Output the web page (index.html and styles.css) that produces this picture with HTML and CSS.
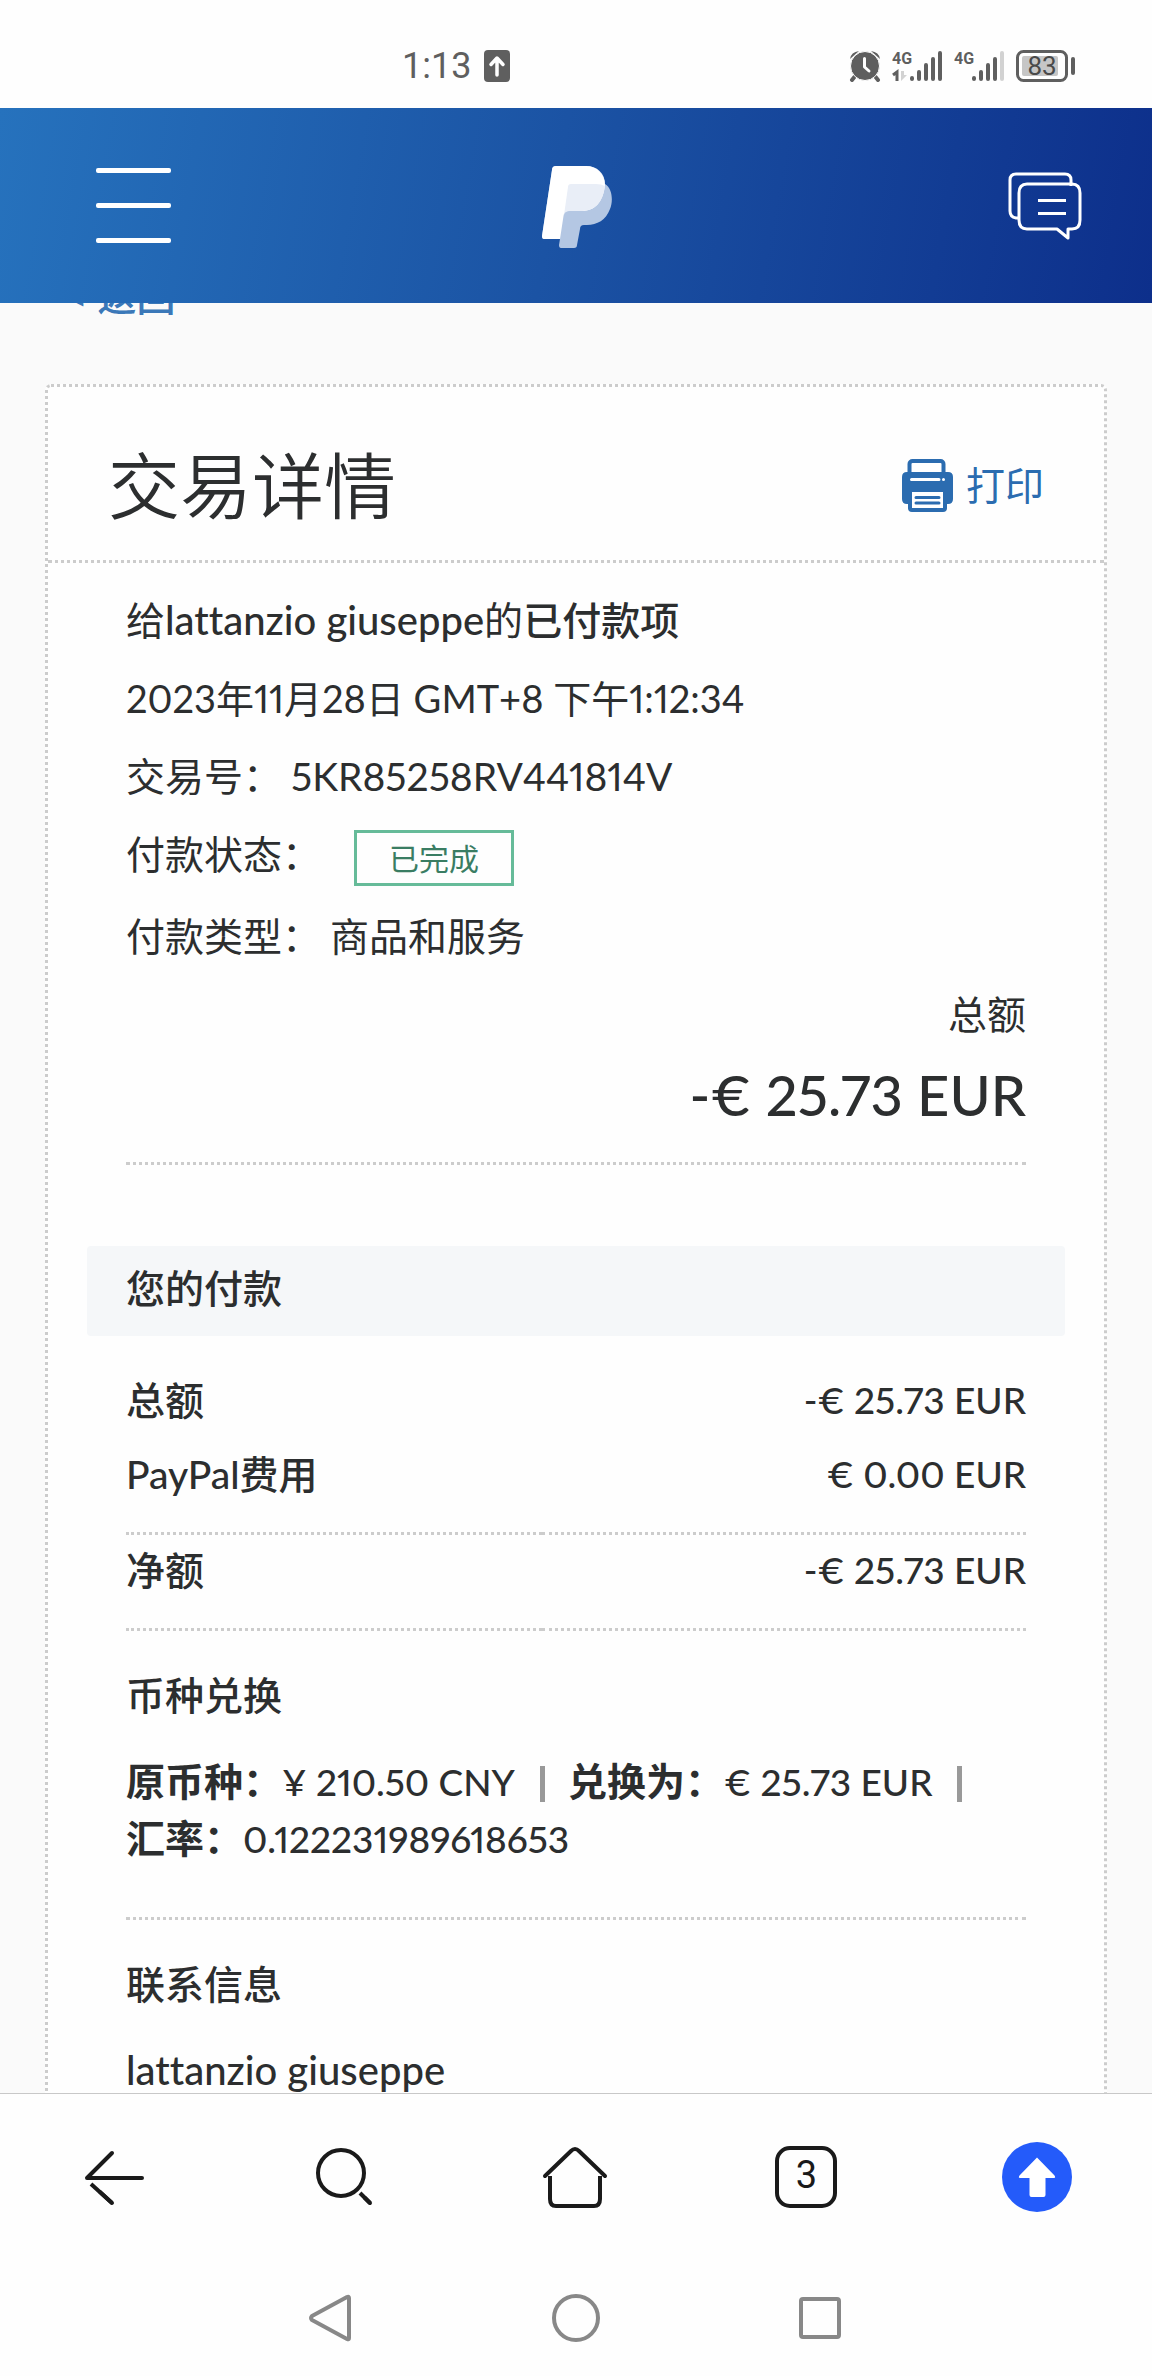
FILE: index.html
```html
<!DOCTYPE html>
<html lang="zh-CN">
<head>
<meta charset="utf-8">
<meta name="viewport" content="width=device-width, initial-scale=1">
<title>交易详情</title>
<link rel="stylesheet" href="styles.css">
</head>
<body>
<div class="status-bar">
  <div class="status-left">
    <span class="clock">1:13</span>
    <svg class="icon" width="26" height="32" viewBox="0 0 26 32" aria-hidden="true"><rect width="26" height="32" rx="4" fill="#5f5f5f"/><path d="M13 25V9M7 14.500l6-6.500 6 6.500" fill="none" stroke="#fff" stroke-width="3.500" stroke-linecap="round" stroke-linejoin="round"/></svg>
  </div>
  <div class="status-right">
    <svg class="icon" width="32" height="32" viewBox="0 0 32 32" aria-hidden="true"><path d="M7 25l-4 5M25 25l4 5" stroke="#5f5f5f" stroke-width="4" stroke-linecap="round" fill="none"/><path d="M1 9Q2 2 10 1ZM31 9Q30 2 22 1Z" fill="#5f5f5f"/><circle cx="16" cy="16" r="14.500" fill="#5f5f5f" stroke="#fefefe" stroke-width="1"/><path d="M15.500 8.500v8.500l4.500 4" fill="none" stroke="#fff" stroke-width="3" stroke-linecap="round" stroke-linejoin="round"/></svg>
    <svg class="icon signal" width="51" height="32" viewBox="0 0 51 32" aria-hidden="true"><text class="net" x="0" y="14">4G</text><path d="M1 25l4-3v9" fill="none" stroke="#5f5f5f" stroke-width="3"/><path d="M9 21h3v4h3l-6 6z" fill="#d2d2d2"/><g stroke="#5f5f5f" stroke-width="4" stroke-linecap="round"><path d="M20 28v1M27 22v7M34 15v14M41 9v20M48 3v26"/></g></svg>
    <svg class="icon signal" width="51" height="32" viewBox="0 0 51 32" aria-hidden="true"><text class="net" x="0" y="14">4G</text><g stroke="#5f5f5f" stroke-width="4" stroke-linecap="round"><path d="M20 28v1M27 22v7M34 15v14M41 9v20"/><path d="M48 3v26" stroke="#d2d2d2"/></g></svg>
    <svg class="icon" width="60" height="32" viewBox="0 0 60 32" aria-hidden="true"><rect x="1.500" y="1.500" width="49" height="29" rx="6" fill="#fff" stroke="#5f5f5f" stroke-width="3"/><rect x="6" y="6" width="36" height="20" rx="2" fill="#c6c6c6"/><rect x="55" y="7" width="4" height="18" rx="2" fill="#5f5f5f"/><text class="charge" x="26" y="25" text-anchor="middle">83</text></svg>
  </div>
</div>

<header class="site-header">
  <button class="icon-button menu" aria-label="菜单">
    <svg width="75" height="75" viewBox="0 0 75 75"><g fill="#fff"><rect width="75" height="5" rx="2"/><rect y="35" width="75" height="5" rx="2"/><rect y="70" width="75" height="5" rx="2"/></g></svg>
  </button>
  <a class="logo" href="#" aria-label="PayPal">
    <svg width="70" height="82" viewBox="0 0 70 82"><path d="M14 0H44C55 0 63 7 63 18C71 23 71 36 68 43C64 54 55 59 45 59H42Q38 59 38 63L35 79Q35 82 32 82H19Q17 82 17 79L18 73H2Q0 73 0 70L10 4Q10 0 14 0Z" fill="#b4c7e3"/><path d="M14 0H44C55 0 63 8 63 19C61 36 53 45 40 45H27Q22 45 21.500 50L18 73H2Q0 73 0 70L10 4Q10 0 14 0Z" fill="#fff"/><path d="M29 18H54Q59 18 63 20C61 36 53 45 40 45H27Q23 45 22 49L26 21Q26 18 29 18Z" fill="#e9eef7"/></svg>
  </a>
  <button class="icon-button chat" aria-label="消息">
    <svg width="74" height="68" viewBox="0 0 74 68" fill="none" stroke="#fff" stroke-width="3" stroke-linejoin="round"><path d="M11 46H8Q2 45 2 39V8Q2 2 8 2H57Q63 2 63 8V14"/><path d="M19 12H64Q72 12 72 21V48Q72 57 64 57H60V66L49 57H19Q11 57 11 48V21Q11 12 19 12Z"/><path d="M30 28.500H58M30 41.500H58"/></svg>
  </button>
</header>

<main class="page">
  <a class="back" href="#">&lt; 返回</a>
  <article class="card">
    <header class="card-header">
      <h1>交易详情</h1>
      <button class="print">
        <svg width="51" height="53" viewBox="0 0 51 53" aria-hidden="true"><rect x="7.500" y="2" width="34" height="24" rx="3" fill="#fff" stroke="#2b6cb0" stroke-width="4"/><path d="M5 13H46Q51 13 51 18V40Q51 45 46 45H45V49Q45 53 41 53H10Q6 53 6 49V45H5Q0 45 0 40V18Q0 13 5 13Z" fill="#2b6cb0"/><path d="M9.500 20.500H37M41.500 20.500h0" stroke="#fff" stroke-width="3" stroke-linecap="round"/><rect x="10" y="33" width="31" height="16" fill="#fff"/><path d="M14 38.500H37M14 44H37" stroke="#2b6cb0" stroke-width="3" stroke-linecap="round"/></svg>
        <span>打印</span>
      </button>
    </header>
    <div class="card-body">
      <section class="summary">
        <p>给<span class="name">lattanzio giuseppe</span>的<b class="medium">已付款项</b></p>
        <p class="date">2023年11月28日 GMT+8 下午1:12:34</p>
        <p>交易号：<span class="value">5KR85258RV441814V</span></p>
        <p class="state">付款状态：<span class="badge">已完成</span></p>
        <p>付款类型：<span class="value">商品和服务</span></p>
        <div class="total">
          <p>总额</p>
          <p class="amount">-€ 25.73 EUR</p>
        </div>
      </section>

      <h2 class="band">您的付款</h2>
      <table class="payment">
        <tbody>
          <tr><th scope="row">总额</th><td>-€ 25.73 EUR</td></tr>
          <tr class="ruled"><th scope="row">PayPal费用</th><td>€ 0.00 EUR</td></tr>
          <tr class="ruled net-row"><th scope="row">净额</th><td>-€ 25.73 EUR</td></tr>
        </tbody>
      </table>

      <section class="block">
        <h2>币种兑换</h2>
        <p><span class="rate"><b>原币种：</b><span class="figure">¥ 210.50 CNY</span><i class="bar"></i></span><span class="rate"><b>兑换为：</b><span class="figure">€ 25.73 EUR</span><i class="bar"></i></span><span class="rate"><b>汇率：</b><span class="figure">0.122231989618653</span></span></p>
      </section>
      <section class="block">
        <h2>联系信息</h2>
        <p class="name">lattanzio giuseppe</p>
      </section>
    </div>
  </article>
</main>

<nav class="toolbar" aria-label="浏览器">
  <button class="icon-button" aria-label="后退"><svg width="70" height="70" viewBox="0 0 70 70" fill="none" stroke="#1a1a1a" stroke-width="4" stroke-linecap="round" stroke-linejoin="round"><path d="M62 36H7L32 11"/><path d="M11 42L32 61" stroke-linecap="butt"/><path d="M20 50L32 61"/></svg></button>
  <button class="icon-button" aria-label="搜索"><svg width="70" height="70" viewBox="0 0 70 70" fill="none" stroke="#1a1a1a" stroke-width="4" stroke-linecap="round"><circle cx="30" cy="31" r="23"/><path d="M49 51L59 61" stroke-linecap="butt"/><path d="M54 56L59 61"/></svg></button>
  <button class="icon-button" aria-label="主页"><svg width="70" height="70" viewBox="0 0 70 70" fill="none" stroke="#1a1a1a" stroke-width="4" stroke-linecap="round" stroke-linejoin="round"><path d="M4 34L30 9Q34 5 38 9L64 34"/><path d="M9 34V57Q9 64 15 64H53Q59 64 59 57V34" stroke-linecap="butt"/></svg></button>
  <button class="icon-button" aria-label="标签页"><span class="tabs">3</span></button>
  <button class="icon-button" aria-label="回到顶部"><svg width="70" height="70" viewBox="0 0 70 70"><circle cx="35" cy="35" r="35" fill="#245bfa"/><path d="M35 15.500L52.500 33.500Q54 36 52 36H43.500V53Q43.500 55 41.500 55H29.500Q27.500 55 27.500 53V36H18Q16 36 17.500 33.500Z" fill="#fff"/></svg></button>
</nav>
<nav class="system-nav" aria-label="系统导航">
  <button class="icon-button" aria-label="返回"><svg width="50" height="50" viewBox="0 0 50 50" fill="none" stroke="#888" stroke-width="4" stroke-linejoin="round"><path d="M40 4Q42 3 42 5V45Q42 47 40 46L5 27Q3 25 5 23Z"/></svg></button>
  <button class="icon-button" aria-label="主屏幕"><svg width="50" height="50" viewBox="0 0 50 50" fill="none" stroke="#888" stroke-width="4"><circle cx="25" cy="25" r="22"/></svg></button>
  <button class="icon-button" aria-label="最近任务"><svg width="50" height="50" viewBox="0 0 50 50" fill="none" stroke="#888" stroke-width="4"><rect x="6" y="6" width="38" height="38" rx="2"/></svg></button>
</nav>
</body>
</html>
```
FILE: styles.css
```css
* {
  box-sizing: border-box;
}

body {
  display: flex;
  flex-direction: column;
  height: 100vh;
  margin: 0;
  background: #fefefe;
  color: #2c2e2f;
  font: 39px/56px Lato, "Noto Sans CJK SC", sans-serif;
  font-variant-ligatures: none;
  font-variant-numeric: proportional-nums;
}

h1, h2, p {
  margin: 0;
  font-size: inherit;
  font-weight: 400;
}

h2, .medium {
  font-weight: 500;
}

button {
  padding: 0;
  border: 0;
  background: none;
  color: inherit;
  font: inherit;
}

svg {
  display: block;
}

.icon-button {
  display: flex;
  align-items: center;
  justify-content: center;
}

/* Phone status bar */
.status-bar {
  display: flex;
  flex: none;
  align-items: center;
  justify-content: space-between;
  height: 108px;
  padding: 24px 76px 0 402px;
  color: #5f5f5f;
}

.status-left, .status-right {
  display: flex;
  align-items: center;
}

.status-left {
  gap: 13px;
}

.status-right {
  gap: 11px;
}

.clock {
  font: 36px/40px Roboto, sans-serif;
}

.net {
  fill: #5f5f5f;
  font: bold 16px Roboto, sans-serif;
}

.charge {
  fill: #4a4a4a;
  font: 26px Roboto, sans-serif;
}

/* Site header */
.site-header {
  display: grid;
  flex: none;
  grid-template-columns: 1fr auto 1fr;
  align-items: center;
  height: 195px;
  padding: 0 70px 0 96px;
  background: linear-gradient(100deg, #2672bd 0%, #1b53a4 48%, #0d2f8b 100%);
}

.menu {
  justify-self: start;
}

.logo {
  margin: 2px 24px 0 0;
}

.chat {
  justify-self: end;
}

/* Scrolled page */
.page {
  flex: 1;
  min-height: 0;
  padding: 0 45px;
  overflow: hidden;
  background: #fafafa;
}

.back {
  display: block;
  margin: -35px 0 60px 20px;
  color: #3b78b8;
  font-weight: 500;
  text-decoration: none;
}

.card {
  border: 3px dotted #ccc;
  border-radius: 6px;
  background: #fefefe;
}

.card-header {
  display: flex;
  align-items: center;
  justify-content: space-between;
  height: 176px;
  padding: 23px 60px 0;
  border-bottom: 3px dotted #ccc;
}

h1 {
  font-size: 72px;
  font-weight: 350;
  line-height: 96px;
}

.print {
  display: flex;
  align-items: center;
  gap: 13px;
  color: #2b6cb0;
}

.card-body {
  padding: 29px 78px;
}

.summary {
  display: grid;
  gap: 22px;
  padding-bottom: 30px;
  border-bottom: 3px dotted #ccc;
}

.name {
  font-size: 40px;
  font-weight: 500;
}

.date {
  font-size: 38px;
}

.value {
  margin-left: 9px;
}

.state {
  display: flex;
}

.badge {
  margin: 4px 0 0 33px;
  padding: 0 32px;
  border: 3px solid #66bb99;
  color: #3a7d63;
  font-size: 30px;
  line-height: 50px;
}

.total {
  text-align: right;
}

.amount {
  margin-top: 16px;
  font-size: 56px;
  font-weight: 500;
  line-height: 74px;
}

.band {
  margin: 81px -39px 27px;
  padding: 14px 39px 20px;
  border-radius: 4px;
  background: #f5f7f9;
}

.payment {
  width: 100%;
  border-spacing: 0;
}

.payment th, .payment td {
  padding: 9px 0;
  text-align: right;
}

.payment th {
  font-weight: 500;
  text-align: left;
}

.payment td, .figure {
  font-size: 37px;
  font-weight: 500;
}

.payment .ruled > * {
  padding-bottom: 30px;
  border-bottom: 3px dotted #ccc;
}

.payment .net-row > * {
  padding-top: 7px;
}

.block {
  padding: 36px 0 50px;
  border-bottom: 3px dotted #ccc;
}

.block h2 {
  margin-bottom: 30px;
}

.rate {
  display: inline-block;
  white-space: nowrap;
}

.bar {
  display: inline-block;
  width: 5px;
  height: 36px;
  margin: 0 23px 0 25px;
  background: #999;
  vertical-align: -6px;
}

/* Browser toolbar and system navigation */
.toolbar {
  display: grid;
  flex: none;
  grid-template-columns: repeat(5, 1fr);
  height: 167px;
  border-top: 1px solid #c8c8c8;
}

.tabs {
  width: 62px;
  height: 62px;
  border: 4px solid #1a1a1a;
  border-radius: 15px;
  color: #1a1a1a;
  font: 38px/50px Roboto, sans-serif;
  text-align: center;
}

.system-nav {
  display: grid;
  flex: none;
  grid-template-columns: repeat(3, 244px);
  justify-content: center;
  height: 116px;
}
```
